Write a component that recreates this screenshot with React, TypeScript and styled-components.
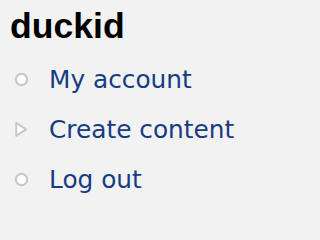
import styled, { createGlobalStyle } from "styled-components"

const GlobalStyle = createGlobalStyle`
    body {
        margin: 0;
        background: #f2f2f2;
    }
`

const Block = styled.div`
    width: 245px;
    height: 204px;
    background: #f2f2f2;
    padding: 6px 0 0 10px;
    box-sizing: border-box;
    overflow: hidden;
`

const Title = styled.h2`
    margin: 0;
    font-family: "Liberation Sans", Arial, sans-serif;
    font-weight: bold;
    font-size: 35.6px;
    line-height: 40px;
    color: #000;
`

const Menu = styled.ul`
    list-style: none;
    margin: 9px 0 0;
    padding: 0;
`

const Item = styled.li`
    display: flex;
    align-items: center;
    height: 50px;
`

const Bullet = styled.span`
    width: 39px;
    display: flex;
    justify-content: flex-start;
    padding-left: 4px;
    box-sizing: border-box;
    margin-top: -1px;
`

const Link = styled.a`
    font-family: "DejaVu Sans", Verdana, sans-serif;
    font-size: 24.8px;
    line-height: 50px;
    color: #163c82;
    text-decoration: none;
    white-space: nowrap;
`

function Leaf() {
    return (
        <svg width="16" height="16" viewBox="0 0 16 16">
            <circle cx="7.5" cy="7.5" r="5.6" fill="#fff" stroke="#c8c8c8" strokeWidth="2.2" />
        </svg>
    )
}

function Collapsed() {
    return (
        <svg width="16" height="16" viewBox="0 0 16 16">
            <path d="M2.2 0.8 L12 7.3 L2.2 13.8 Z" fill="#fff" stroke="#c8c8c8" strokeWidth="2" strokeLinejoin="round" />
        </svg>
    )
}

const items = [
    { label: "My account", kind: "leaf" },
    { label: "Create content", kind: "collapsed" },
    { label: "Log out", kind: "leaf" },
]

export default function App() {
    return (
        <>
            <GlobalStyle />
            <Block>
                <Title>duckid</Title>
                <Menu>
                    {items.map((item) => (
                        <Item key={item.label}>
                            <Bullet>{item.kind === "leaf" ? <Leaf /> : <Collapsed />}</Bullet>
                            <Link href="#">{item.label}</Link>
                        </Item>
                    ))}
                </Menu>
            </Block>
        </>
    )
}
